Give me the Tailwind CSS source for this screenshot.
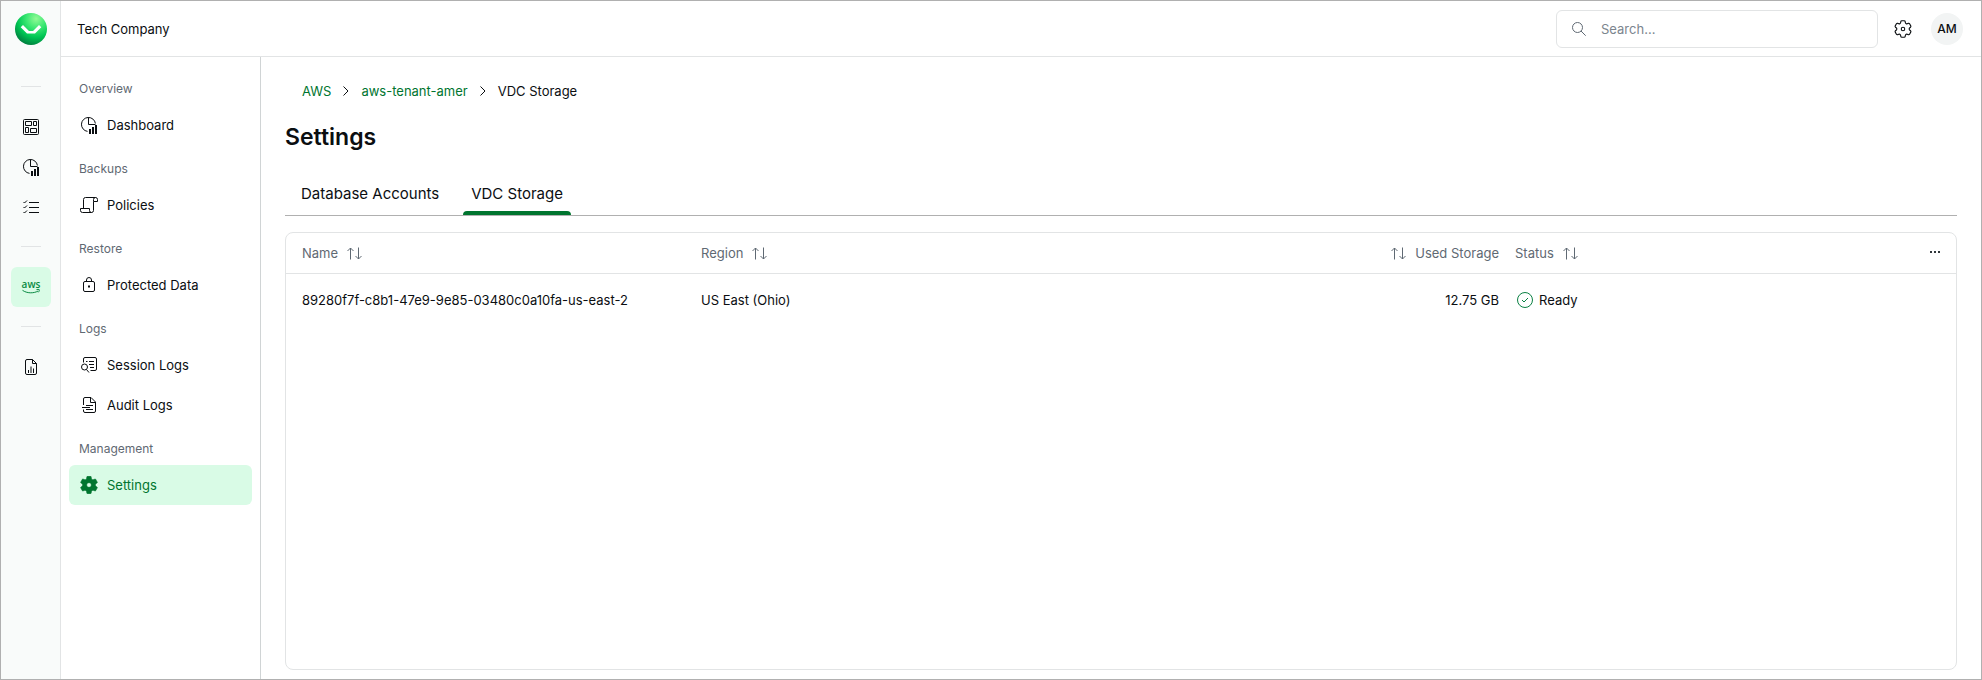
<!DOCTYPE html>
<html lang="en">
<head>
<meta charset="utf-8">
<meta name="viewport" content="width=device-width, initial-scale=1">
<title>Settings - VDC Storage</title>
<script src="https://cdn.jsdelivr.net/npm/@tailwindcss/browser@4"></script>
</head>
<body class="flex min-h-screen border border-[#b0b0b0] bg-white font-['Inter',sans-serif] text-[13px] leading-5 text-[#0b0e11]">

<svg class="hidden" aria-hidden="true">
  <symbol id="pie" viewBox="0 0 16 17">
    <path d="M6.5 14.4A7 7 0 1 1 14.4 6.5" fill="none" stroke="currentColor"/>
    <path d="M7.5.5v7h7" fill="none" stroke="currentColor"/>
    <path d="M8 12h2v5H8zM11 10h2v7h-2zM14 8h2v9h-2z" fill="currentColor"/>
  </symbol>
  <symbol id="sort" viewBox="0 0 15 13">
    <path d="M3.5 12.5V1M.5 4l3-3 3 3M11.5.5V12M8.500 9l3 3 3-3" fill="none" stroke="currentColor"/>
  </symbol>
  <symbol id="chevron" viewBox="0 0 6 10">
    <path d="M.5.5 5 5 .5 9.500" fill="none" stroke="currentColor"/>
  </symbol>
</svg>

<nav aria-label="Workspaces" class="flex w-15 shrink-0 flex-col items-center border-r border-[#e2e4e5] bg-[#f9fbfa] pt-3">
  <a href="#" aria-label="Home" class="mb-[22px] block size-8">
    <svg viewBox="0 0 32 32" class="size-8">
      <defs><radialGradient id="orb" cx=".66" cy=".18" r=".85"><stop offset="0" stop-color="#92fa95"/><stop offset=".35" stop-color="#3de873"/><stop offset=".68" stop-color="#00c653"/><stop offset="1" stop-color="#00803f"/></radialGradient></defs>
      <circle cx="16" cy="16" r="16" fill="url(#orb)"/>
      <path d="M5.700 14.300 8 12l6 6h4l6-6 2.300 2.300L20 20.500h-8z" fill="#fff"/>
    </svg>
  </a>
  <div class="h-10 w-5 pt-[19px]"><hr class="border-[#e2e4e5]"></div>
  <a href="#" aria-label="Tiles" class="flex size-10 items-center justify-center">
    <svg viewBox="0 0 16 16" class="size-4" fill="none" stroke="currentColor"><rect x=".5" y=".5" width="15" height="15" rx="1"/><path d="M2.500 2.500h6v4h-6zM10.500 2.500h3v4h-3zM2.500 8.500h3v5h-3zM7.500 9.500h6v4h-6z"/></svg>
  </a>
  <a href="#" aria-label="Reports" class="flex size-10 items-center justify-center"><svg class="h-[17px] w-4"><use href="#pie"/></svg></a>
  <a href="#" aria-label="Tasks" class="flex size-10 items-center justify-center">
    <svg viewBox="0 0 16 14" class="h-3.5 w-4" fill="none" stroke="currentColor"><path d="M6 2.500h10M6 7.500h10M6 12.500h10M.5 2l1 1L4 .5M.5 7l1 1L4 5.500M.5 12l1 1L4 10.500"/></svg>
  </a>
  <div class="h-10 w-5 pt-[19px]"><hr class="border-[#e2e4e5]"></div>
  <a href="#" aria-label="AWS" aria-current="true" class="flex size-10 items-center justify-center rounded-md bg-[#d9fbe6] text-[#0a8a43]">
    <svg viewBox="0 0 24 20" class="h-5 w-6 overflow-visible"><text x="12" y="11" text-anchor="middle" font-family="Open Sans, sans-serif" font-size="10" font-weight="600" fill="currentColor">aws</text><path d="M3.500 13.300c4.500 3.200 11 3.200 15.500.8M17.500 12.600c1-.3 2.300-.4 2.700 0 .3.600-.2 1.900-.8 2.700" fill="none" stroke="currentColor"/></svg>
  </a>
  <div class="h-10 w-5 pt-[19px]"><hr class="border-[#e2e4e5]"></div>
  <a href="#" aria-label="Usage" class="flex size-10 items-center justify-center">
    <svg viewBox="0 0 12 16" class="h-4 w-3" fill="none" stroke="currentColor"><path d="M7.500.5H2A1.500 1.500 0 0 0 .5 2v12A1.500 1.500 0 0 0 2 15.500h8a1.500 1.500 0 0 0 1.500-1.500V4.500zV4.500h4M3.500 14v-3M6 14V7.500M8.500 14V9.500"/></svg>
  </a>
</nav>

<div class="flex min-w-0 flex-1 flex-col">
  <header class="flex h-14 shrink-0 items-center border-b border-[#e2e4e5] pr-[18px] pl-4">
    <div class="flex-1">Tech Company</div>
    <label class="flex h-[38px] w-[322px] items-center gap-[15px] rounded-md border border-[#e2e4e5] px-[15px] text-[#5f6973]">
      <svg viewBox="0 0 14 14" class="size-3.5" fill="none" stroke="currentColor"><circle cx="5.500" cy="5.500" r="5"/><path d="m9 9 4.700 4.700"/></svg>
      <input type="search" aria-label="Search" placeholder="Search..." class="min-w-0 flex-1 outline-none placeholder:text-[#7c858e]">
    </label>
    <button type="button" aria-label="Configuration" class="ml-4 flex size-[18px] items-center justify-center">
      <svg viewBox="2.200 2.200 19.600 19.600" class="size-[18px]" fill="none" stroke="currentColor" stroke-width="1.200"><path d="M9.594 3.940c.09-.542.56-.94 1.110-.94h2.593c.55 0 1.020.398 1.110.94l.213 1.281c.063.374.313.686.645.870.074.040.147.083.220.127.325.196.720.257 1.075.124l1.217-.456a1.125 1.125 0 0 1 1.370.490l1.296 2.247a1.125 1.125 0 0 1-.260 1.431l-1.003.827c-.293.241-.438.613-.430.992a7.723 7.723 0 0 1 0 .255c-.008.378.137.750.430.991l1.004.827c.424.350.534.955.260 1.430l-1.298 2.247a1.125 1.125 0 0 1-1.369.491l-1.217-.456c-.355-.133-.750-.072-1.076.124a6.470 6.470 0 0 1-.220.128c-.331.183-.581.495-.644.869l-.213 1.281c-.090.543-.560.940-1.110.940h-2.594c-.550 0-1.019-.398-1.110-.940l-.213-1.281c-.062-.374-.312-.686-.644-.870a6.520 6.520 0 0 1-.220-.127c-.325-.196-.720-.257-1.076-.124l-1.217.456a1.125 1.125 0 0 1-1.369-.490l-1.297-2.247a1.125 1.125 0 0 1 .260-1.431l1.004-.827c.292-.240.437-.613.430-.991a6.932 6.932 0 0 1 0-.255c.007-.380-.138-.751-.430-.992l-1.004-.827a1.125 1.125 0 0 1-.260-1.430l1.297-2.247a1.125 1.125 0 0 1 1.370-.491l1.216.456c.356.133.751.072 1.076-.124.072-.044.146-.086.220-.128.332-.183.582-.495.644-.869z"/><circle cx="12" cy="12" r="1.900"/></svg>
    </button>
    <button type="button" class="ml-[19px] size-8 rounded-full bg-[#f2f4f4] text-xs font-medium">AM</button>
  </header>

  <div class="flex min-h-0 flex-1">
    <nav aria-label="Sections" class="w-50 shrink-0 border-r border-[#d0d4d5] px-2 pt-2">
      <h2 class="h-10 px-2.5 pt-4 text-xs leading-4 text-[#5f6973]">Overview</h2>
      <a href="#" class="flex h-10 items-center gap-2 rounded-md pl-2.5"><span class="flex w-5 justify-center"><svg class="h-[17px] w-4"><use href="#pie"/></svg></span>Dashboard</a>
      <h2 class="h-10 px-2.5 pt-4 text-xs leading-4 text-[#5f6973]">Backups</h2>
      <a href="#" class="flex h-10 items-center gap-2 rounded-md pl-2.5"><span class="flex w-5 justify-center"><svg viewBox="0 0 18 16" class="h-4 w-[18px]" fill="none" stroke="currentColor"><path d="M3.500 11.500v-9a2 2 0 0 1 2-2h10M13.500 4.500v-2a2 2 0 0 1 4 0v2zv9a2 2 0 0 1-2 2h-9a2 2 0 0 1-2-2v-2h9v2a2 2 0 0 0 2 2"/></svg></span>Policies</a>
      <h2 class="h-10 px-2.5 pt-4 text-xs leading-4 text-[#5f6973]">Restore</h2>
      <a href="#" class="flex h-10 items-center gap-2 rounded-md pl-2.5"><span class="flex w-5 justify-center"><svg viewBox="0 0 12 16" class="h-4 w-3" fill="none" stroke="currentColor"><rect x=".5" y="4.500" width="11" height="10" rx="1.500"/><path d="M3.500 4.500V3a2.500 2.500 0 0 1 5 0v1.500"/><path d="M5 8.500h2v2H5z" fill="currentColor" stroke="none"/></svg></span>Protected Data</a>
      <h2 class="h-10 px-2.5 pt-4 text-xs leading-4 text-[#5f6973]">Logs</h2>
      <a href="#" class="flex h-10 items-center gap-2 rounded-md pl-2.5"><span class="flex w-5 justify-center"><svg viewBox="0 0 16 16" class="size-4" fill="none" stroke="currentColor"><path d="M2.500 5.500V2A1.500 1.500 0 0 1 4 .5h10A1.500 1.500 0 0 1 15.500 2v10a1.500 1.500 0 0 1-1.500 1.500H9.500M8 4.500h5M8 7.500h5M9 10.500h4M5 4.500h1.500"/><circle cx="3.500" cy="10" r="3"/><path d="m5.500 12.500 2.500 3"/></svg></span>Session Logs</a>
      <a href="#" class="flex h-10 items-center gap-2 rounded-md pl-2.5"><span class="flex w-5 justify-center"><svg viewBox="0 0 14 16" class="h-4 w-3.5" fill="none" stroke="currentColor"><path d="M1.500 8V2A1.500 1.500 0 0 1 3 .5h6L13.500 5v9a1.500 1.500 0 0 1-1.500 1.500H3A1.500 1.500 0 0 1 1.500 14v-1.500M8.500.5V5.500h5M4 8.500h7M0 10.500h8M4 12.500h7"/></svg></span>Audit Logs</a>
      <h2 class="h-10 px-2.5 pt-4 text-xs leading-4 text-[#5f6973]">Management</h2>
      <a href="#" aria-current="page" class="flex h-10 items-center gap-2 rounded-md bg-[#d9fbe6] pl-2.5 text-[#00752f]"><span class="flex w-5 justify-center"><svg viewBox="2 2 20 20" class="size-[18px]"><path fill="#00752f" stroke="#00752f" stroke-width=".6" stroke-linejoin="round" fill-rule="evenodd" d="M19.140 12.940c.040-.300.060-.610.060-.940 0-.320-.020-.640-.070-.940l2.030-1.580a.490.490 0 0 0 .120-.610l-1.920-3.320a.488.488 0 0 0-.590-.220l-2.390.960c-.500-.380-1.030-.700-1.620-.940l-.360-2.540a.484.484 0 0 0-.480-.410h-3.840c-.240 0-.430.170-.470.410l-.360 2.540c-.590.240-1.130.570-1.620.940l-2.390-.960c-.220-.080-.470 0-.590.220L2.740 8.870c-.120.210-.080.470.120.610l2.030 1.580c-.050.300-.090.630-.090.940s.020.640.070.940l-2.030 1.580a.490.490 0 0 0-.120.610l1.920 3.320c.120.220.370.290.590.220l2.390-.960c.500.380 1.030.700 1.620.940l.360 2.540c.050.240.240.410.480.410h3.840c.240 0 .440-.170.470-.410l.360-2.540c.590-.240 1.130-.560 1.620-.940l2.390.960c.220.080.470 0 .590-.220l1.920-3.320c.120-.220.070-.470-.120-.610zM12 14.600a2.600 2.600 0 1 1 0-5.200 2.600 2.600 0 0 1 0 5.200z"/></svg></span>Settings</a>
    </nav>

    <main class="flex min-w-0 flex-1 flex-col px-6 pt-6 pb-[9px]">
      <nav aria-label="Breadcrumb" class="flex items-center pl-[17px]">
        <a href="#" class="text-[#00752f]">AWS</a>
        <svg class="mx-3 h-2.5 w-1.5"><use href="#chevron"/></svg>
        <a href="#" class="text-[#00752f]">aws-tenant-amer</a>
        <svg class="mx-3 h-2.5 w-1.5"><use href="#chevron"/></svg>
        <span aria-current="page">VDC Storage</span>
      </nav>
      <h1 class="mt-5 text-[23px] leading-8 font-semibold">Settings</h1>
      <div role="tablist" class="mt-5 flex h-[43px] border-b border-[#b0b0b0] pl-2 text-[15px]">
        <button type="button" role="tab" aria-selected="false" class="px-2">Database Accounts</button>
        <button type="button" role="tab" aria-selected="true" class="relative ml-4 px-2 after:absolute after:inset-x-0 after:bottom-0 after:h-1 after:rounded-t after:bg-[#00752f]">VDC Storage</button>
      </div>
      <div class="mt-4 min-h-0 flex-1 rounded-lg border border-[#e2e4e5]">
        <table class="w-full table-fixed border-separate border-spacing-0 text-left">
          <colgroup><col class="w-[399px]"><col><col class="w-[399px]"><col class="w-[399px]"><col class="w-[50px]"></colgroup>
          <thead>
            <tr class="h-[41px] text-[#5f6973]">
              <th class="border-b border-[#e2e4e5] px-4 font-normal"><button type="button" class="flex items-center gap-[9px]">Name<svg class="h-[13px] w-[15px]"><use href="#sort"/></svg></button></th>
              <th class="border-b border-[#e2e4e5] px-4 font-normal"><button type="button" class="flex items-center gap-[9px]">Region<svg class="h-[13px] w-[15px]"><use href="#sort"/></svg></button></th>
              <th class="border-b border-[#e2e4e5] px-2 font-normal"><button type="button" class="ml-auto flex items-center gap-[9px]"><svg class="h-[13px] w-[15px]"><use href="#sort"/></svg>Used Storage</button></th>
              <th class="border-b border-[#e2e4e5] px-2 font-normal"><button type="button" class="flex items-center gap-[9px]">Status<svg class="h-[13px] w-[15px]"><use href="#sort"/></svg></button></th>
              <th class="border-b border-[#e2e4e5] pr-4"><button type="button" aria-label="Columns" class="ml-auto block pt-2 pb-2.5 text-[#30363b]"><svg viewBox="0 0 10 2" class="h-0.5 w-2.5" fill="currentColor"><path d="M0 0h2v2H0zM4 0h2v2H4zM8 0h2v2H8z"/></svg></button></th>
            </tr>
          </thead>
          <tbody>
            <tr class="h-[52px]">
              <td class="px-4">89280f7f-c8b1-47e9-9e85-03480c0a10fa-us-east-2</td>
              <td class="px-4">US East (Ohio)</td>
              <td class="px-2 text-right">12.75 GB</td>
              <td class="px-2"><span class="flex items-center gap-1.5 pl-0.5"><svg viewBox="0 0 16 16" class="size-4" fill="none" stroke="#0a8043"><circle cx="8" cy="8" r="7.500"/><path d="m5 8 2 2 4-4"/></svg>Ready</span></td>
              <td></td>
            </tr>
          </tbody>
        </table>
      </div>
    </main>
  </div>
</div>
</body>
</html>
